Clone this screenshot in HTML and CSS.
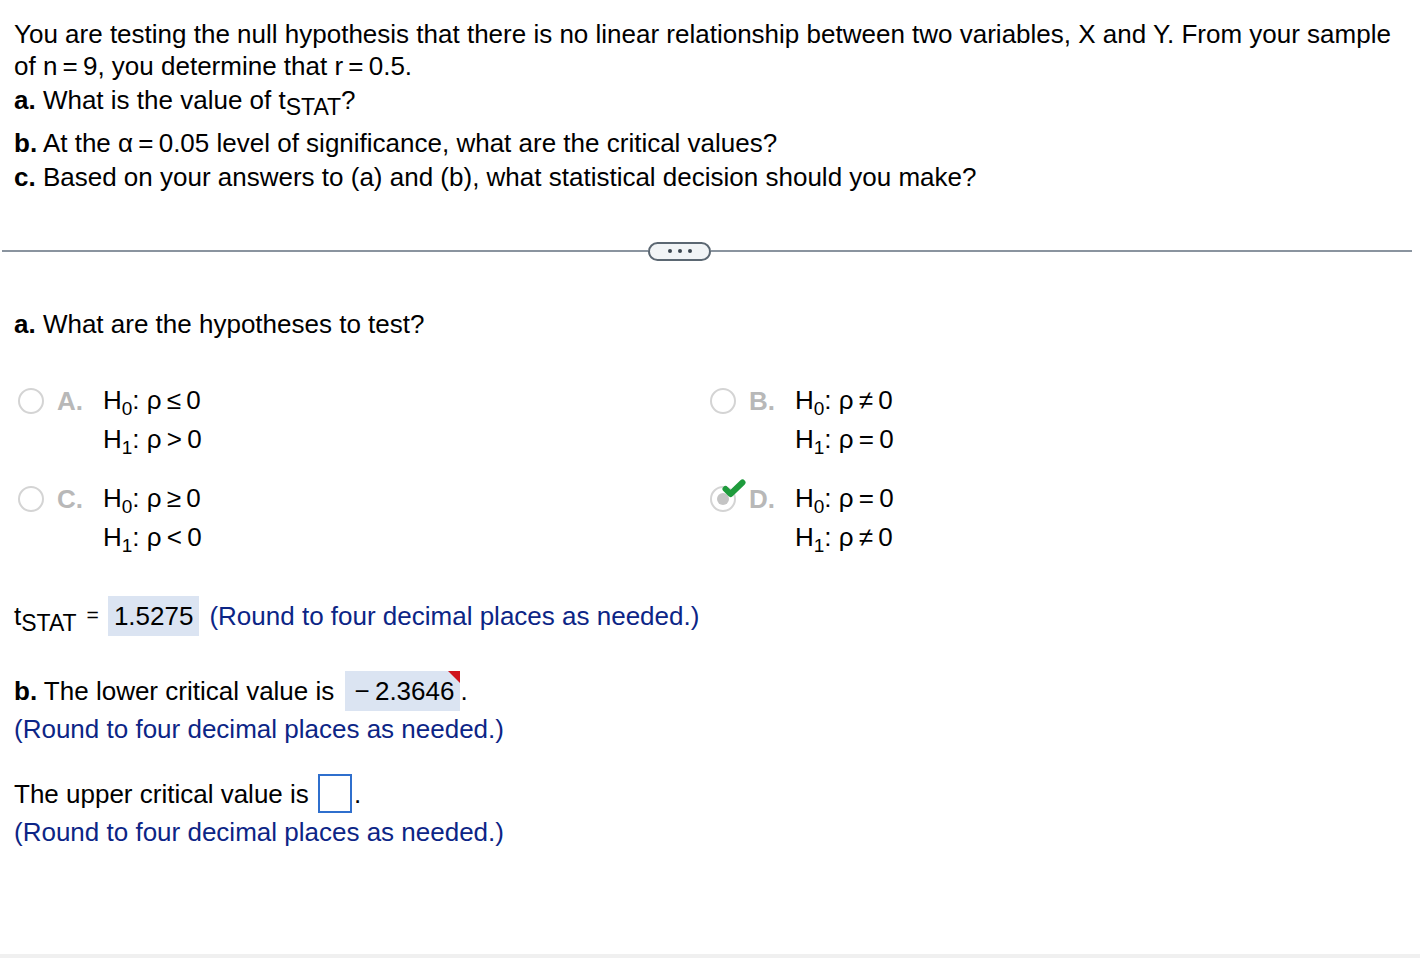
FILE: index.html
```html
<!DOCTYPE html>
<html>
<head>
<meta charset="utf-8">
<link rel="stylesheet" href="styles.css">
</head>
<body>
<div class="page">
  <div class="question">
    <p class="line">You are testing the null hypothesis that there is no linear relationship between two variables, X and Y. From your sample of n&thinsp;=&thinsp;9, you determine that r&thinsp;=&thinsp;0.5.</p>
    <p class="line part-a"><b>a.</b> What is the value of t<sub class="sub">STAT</sub>?</p>
    <p class="line part-b"><b>b.</b> At the &alpha;&thinsp;=&thinsp;0.05 level of significance, what are the critical values?</p>
    <p class="line"><b>c.</b> Based on your answers to (a) and (b), what statistical decision should you make?</p>
  </div>

  <div class="divider">
    <span class="rule rule-left"></span>
    <span class="more"><i></i><i></i><i></i></span>
    <span class="rule"></span>
  </div>

  <div class="answer">
    <p class="line"><b>a.</b> What are the hypotheses to test?</p>

    <div class="options">
      <div class="option">
        <span class="radio"></span>
        <span class="letter">A.</span>
        <div class="hyp">
          <div>H<sub class="hsub">0</sub>: &rho;&thinsp;&le;&thinsp;0</div>
          <div>H<sub class="hsub">1</sub>: &rho;&thinsp;&gt;&thinsp;0</div>
        </div>
      </div>
      <div class="option">
        <span class="radio"></span>
        <span class="letter">B.</span>
        <div class="hyp">
          <div>H<sub class="hsub">0</sub>: &rho;&thinsp;&ne;&thinsp;0</div>
          <div>H<sub class="hsub">1</sub>: &rho;&thinsp;=&thinsp;0</div>
        </div>
      </div>
      <div class="option">
        <span class="radio"></span>
        <span class="letter">C.</span>
        <div class="hyp">
          <div>H<sub class="hsub">0</sub>: &rho;&thinsp;&ge;&thinsp;0</div>
          <div>H<sub class="hsub">1</sub>: &rho;&thinsp;&lt;&thinsp;0</div>
        </div>
      </div>
      <div class="option">
        <span class="radio checked">
          <svg class="check" width="24" height="20" viewBox="0 0 24 20"><path d="M3.5 10 L8.5 15 L20.5 3.5" fill="none" stroke="#1e9b3c" stroke-width="6" stroke-linecap="round" stroke-linejoin="round"/></svg>
        </span>
        <span class="letter">D.</span>
        <div class="hyp">
          <div>H<sub class="hsub">0</sub>: &rho;&thinsp;=&thinsp;0</div>
          <div>H<sub class="hsub">1</sub>: &rho;&thinsp;&ne;&thinsp;0</div>
        </div>
      </div>
    </div>

    <p class="line tstat"><span class="tlabel">t<sub class="sub">STAT</sub></span><span class="eq">=</span><span class="filled">1.5275</span><span class="hint">(Round to four decimal places as needed.)</span></p>

    <div class="block lower">
      <p class="line first"><b>b.</b> The lower critical value is <span class="filled wrong">&minus;&thinsp;2.3646</span>.</p>
      <p class="line hint">(Round to four decimal places as needed.)</p>
    </div>

    <div class="block upper">
      <p class="line first">The upper critical value is <span class="empty"></span>.</p>
      <p class="line hint">(Round to four decimal places as needed.)</p>
    </div>
  </div>
</div>
<div class="footer-strip"></div>
</body>
</html>
```

FILE: styles.css
```css
html, body {
  margin: 0;
  padding: 0;
  background: #ffffff;
}
body {
  font-family: "Liberation Sans", Arial, sans-serif;
  font-size: 26px;
  color: #000;
  width: 1420px;
  height: 958px;
  position: relative;
  overflow: hidden;
}
.page {
  padding: 18px 0 0 0;
}
.question {
  padding: 0 14px;
}
.line {
  margin: 0;
  line-height: 32px;
}
.part-a {
  margin-top: 2px;
  margin-bottom: 11px;
}
.part-b {
  margin-bottom: 2px;
}
.sub {
  font-size: 23px;
  vertical-align: -6px;
  line-height: 0;
}
.hsub {
  font-size: 19px;
  vertical-align: -6px;
  line-height: 0;
}
.divider {
  display: flex;
  align-items: center;
  margin: 48px 8px 0 2px;
  height: 20px;
}
.rule {
  flex: 1;
  height: 2px;
  background: #8a949f;
}
.rule-left {
  flex: none;
  width: 646px;
}
.more {
  width: 59px;
  height: 15px;
  border: 2px solid #5b6772;
  border-radius: 10px;
  background: #f1f4f6;
  display: flex;
  align-items: center;
  justify-content: center;
  gap: 6px;
}
.more i {
  width: 4px;
  height: 4px;
  border-radius: 50%;
  background: #3c4650;
}
.answer {
  padding: 0 14px;
  margin-top: 47px;
}
.options {
  display: grid;
  grid-template-columns: 692px 1fr;
  row-gap: 24px;
  margin-top: 45px;
}
.option {
  display: flex;
  align-items: flex-start;
}
.radio {
  width: 22px;
  height: 22px;
  border: 2px solid #d4d4d4;
  border-radius: 50%;
  margin: 3px 0 0 4px;
  position: relative;
  flex: none;
  background: #fff;
}
.radio.checked::after {
  content: "";
  position: absolute;
  left: 5px;
  top: 5px;
  width: 12px;
  height: 12px;
  border-radius: 50%;
  background: #c4c4c4;
}
.check {
  position: absolute;
  left: 10px;
  top: -9px;
  z-index: 2;
}
.letter {
  font-weight: bold;
  color: #b8b8b8;
  width: 46px;
  margin-left: 13px;
  line-height: 32px;
}
.hyp {
  line-height: 39px;
  margin-top: -4px;
}
.tstat {
  margin-top: 38px;
  line-height: 40px;
}
.tlabel {
  margin-right: 10px;
}
.tstat .eq {
  font-size: 21px;
  margin-right: 9px;
  vertical-align: 3px;
}
.filled {
  display: inline-block;
  background: #dbe4f2;
  padding: 0 6px;
  line-height: 40px;
  position: relative;
}
.tstat .hint {
  margin-left: 10px;
}
.hint {
  color: #0c2586;
}
.block {
  margin-top: 35px;
}
.first {
  line-height: 40px;
}
.lower .filled {
  padding: 0 6px 0 10px;
  margin-left: 3px;
}
.wrong::after {
  content: "";
  position: absolute;
  top: 0;
  right: 0;
  border-top: 12px solid #d0141e;
  border-left: 12px solid transparent;
}
.block .hint {
  line-height: 38px;
  margin-top: -1px;
}
.upper {
  margin-top: 26px;
}
.empty {
  display: inline-block;
  box-sizing: border-box;
  width: 34px;
  height: 39px;
  border: 2px solid #2f6fcd;
  vertical-align: middle;
  margin: -6px 2px 0 2px;
}
.footer-strip {
  position: absolute;
  left: 0;
  right: 0;
  bottom: 0;
  height: 4px;
  background: #f0f0f0;
}
```
